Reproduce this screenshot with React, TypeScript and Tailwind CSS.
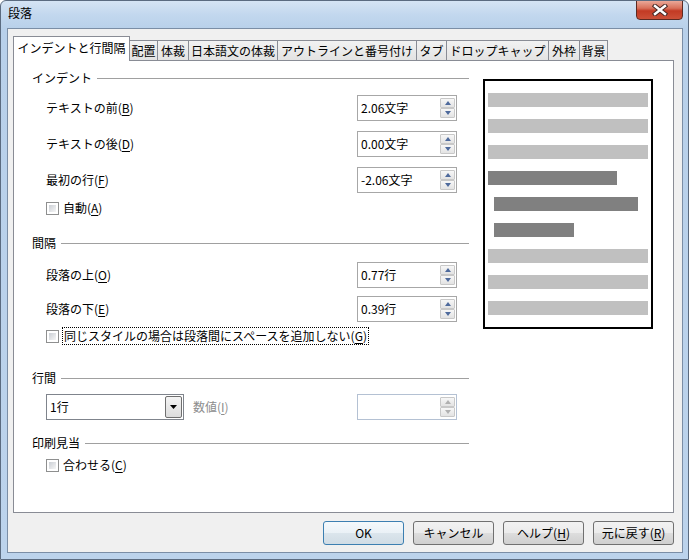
import React from 'react';

const font = '"Noto Sans CJK JP", "Noto Sans", sans-serif';

// widths measured off the reference tab strip
const tabs: { label: string; w: string }[] = [
  { label: '配置', w: 'w-[28px]' },
  { label: '体裁', w: 'w-[31px]' },
  { label: '日本語文の体裁', w: 'w-[89px]' },
  { label: 'アウトラインと番号付け', w: 'w-[139px]' },
  { label: 'タブ', w: 'w-[30px]' },
  { label: 'ドロップキャップ', w: 'w-[102px]' },
  { label: '外枠', w: 'w-[31px]' },
  { label: '背景', w: 'w-[28px]' },
];

function Key({ children }: { children: string }) {
  return <span className="underline underline-offset-2">{children}</span>;
}

function SpinArrow({ up, disabled }: { up?: boolean; disabled?: boolean }) {
  return (
    <div className="flex h-[10px] w-[15px] items-center justify-center rounded-[1px] border border-[#c8c8c8] bg-[linear-gradient(180deg,#f7f7f7,#e3e3e3)]">
      <svg width="6" height="4" viewBox="0 0 6 4">
        <path d={up ? 'M0 4 L3 0 L6 4 Z' : 'M0 0 L3 4 L6 0 Z'} fill={disabled ? '#b0b0b0' : '#4e6a9c'} />
      </svg>
    </div>
  );
}

function SpinBox({ value, disabled }: { value?: string; disabled?: boolean }) {
  return (
    <div
      className={
        disabled
          ? 'flex h-[26px] w-[100px] items-center border border-[#b4c1d3] bg-white pl-[3px] pr-[1px]'
          : 'flex h-[26px] w-[100px] items-center border border-[#a7a7a7] bg-white pl-[3px] pr-[1px]'
      }
    >
      <span className="flex-1 text-[12px] leading-none">{value}</span>
      <div className="flex flex-col">
        <SpinArrow up disabled={disabled} />
        <SpinArrow disabled={disabled} />
      </div>
    </div>
  );
}

function Checkbox() {
  return (
    <div className="h-[13px] w-[13px] border border-[#8e8f8f] bg-white p-[2px]">
      <div className="h-full w-full bg-[linear-gradient(135deg,#cbcfd5,#f6f6f6)]" />
    </div>
  );
}

function Heading({ label, className }: { label: string; className: string }) {
  return (
    <div className={`flex h-[16px] items-center gap-[5px] ${className}`}>
      <span className="text-[12px] leading-none">{label}</span>
      <div className="h-px flex-1 bg-[#a0a0a0]" />
    </div>
  );
}

function FieldRow({ label, k, value, className }: { label: string; k: string; value: string; className: string }) {
  return (
    <div className={`flex h-[26px] items-center ${className}`}>
      <span className="ml-[14px] w-[311px] text-[12px] leading-none">
        {label}(<Key>{k}</Key>)
      </span>
      <SpinBox value={value} />
    </div>
  );
}

function Bar({ dark, className }: { dark?: boolean; className: string }) {
  return <div className={`h-[14px] ${dark ? 'bg-[#808080]' : 'bg-[#c0c0c0]'} ${className}`} />;
}

function DialogButton({ children, primary }: { children: React.ReactNode; primary?: boolean }) {
  return (
    <button
      className={
        primary
          ? 'h-[24px] w-[81px] rounded-[3px] border border-[#3c7fb1] bg-[linear-gradient(180deg,#f4f9fc_0%,#eaf1f6_50%,#dbe5ec_51%,#d0dce5_100%)] text-[12px] leading-none text-black'
          : 'h-[24px] w-[81px] rounded-[3px] border border-[#707070] bg-[linear-gradient(180deg,#f2f2f2_0%,#ebebeb_50%,#dddddd_51%,#cfcfcf_100%)] text-[12px] leading-none text-black'
      }
    >
      {children}
    </button>
  );
}

export default function App() {
  return (
    <div
      className="flex h-[560px] w-[689px] flex-col overflow-hidden rounded-t-[6px] border border-[#5b6b80] bg-[linear-gradient(180deg,#d5e4f4_0px,#c2d7ee_14px,#b8d0ea_28px,#bcd3ec_100%)] text-black"
      style={{ fontFamily: font }}
    >
      {/* title bar */}
      <div className="flex h-[27px] items-start justify-between pl-[7px]">
        <span className="mt-[6px] text-[12px] leading-none">段落</span>
        <div className="mr-[5px] -mt-px flex h-[20px] w-[47px] items-center justify-center rounded-b-[4px] border border-[#5c2a22] bg-[linear-gradient(180deg,#eaa898_0%,#d8705a_40%,#c23a24_55%,#cc5038_100%)]">
          <svg width="16" height="12" viewBox="0 0 16 12">
            <path d="M3 2 L13 10 M13 2 L3 10" stroke="#4a2a26" strokeWidth="4.5" strokeLinecap="square" />
            <path d="M3 2 L13 10 M13 2 L3 10" stroke="#ffffff" strokeWidth="2.4" strokeLinecap="square" />
          </svg>
        </div>
      </div>

      {/* client area */}
      <div className="ml-[6px] mr-[5px] flex flex-1 flex-col border border-[#7b8ea6] bg-[#f0f0f0] pl-[5px] pr-[8px] pt-[7px] pb-[7px]">
        {/* tabs */}
        <div className="flex h-[24px] items-end">
          <div className="relative z-10 -mb-px flex h-[25px] w-[117px] items-start justify-center border-x border-t border-[#898c95] bg-white pt-[5px] text-[12px] leading-none">
            インデントと行間隔
          </div>
          {tabs.map((t) => (
            <div
              key={t.label}
              className={`flex h-[20px] items-center justify-center border-r border-t border-[#898c95] bg-[linear-gradient(180deg,#f2f2f2,#e3e3e3)] pt-[1px] text-[12px] leading-none whitespace-nowrap ${t.w}`}
            >
              {t.label}
            </div>
          ))}
        </div>

        {/* panel */}
        <div className="flex flex-1 border border-[#898c95] bg-white pl-[18px] pt-[9px]">
          <div className="flex w-[437px] flex-col">
            <Heading label="インデント" className="" />
            <FieldRow label="テキストの前" k="B" value="2.06文字" className="mt-[9px]" />
            <FieldRow label="テキストの後" k="D" value="0.00文字" className="mt-[10px]" />
            <FieldRow label="最初の行" k="F" value="-2.06文字" className="mt-[10px]" />
            <div className="ml-[14px] mt-[7px] flex h-[16px] items-center gap-[4px]">
              <Checkbox />
              <span className="text-[12px] leading-none">
                自動(<Key>A</Key>)
              </span>
            </div>

            <Heading label="間隔" className="mt-[19px]" />
            <FieldRow label="段落の上" k="O" value="0.77行" className="mt-[11px]" />
            <FieldRow label="段落の下" k="E" value="0.39行" className="mt-[8px]" />
            <div className="ml-[14px] mt-[5px] flex h-[18px] items-center gap-[3px]">
              <Checkbox />
              <span className="flex h-[18px] items-center border border-dotted border-black px-px text-[12px] leading-none">
                同じスタイルの場合は段落間にスペースを追加しない(<Key>G</Key>)
              </span>
            </div>

            <Heading label="行間" className="mt-[25px]" />
            <div className="mt-[8px] flex h-[26px] items-center">
              <div className="ml-[14px] flex h-[26px] w-[138px] items-center border border-[#7f848c] bg-white pl-[3px] pr-[1px]">
                <span className="flex-1 text-[12px] leading-none">1行</span>
                <div className="flex h-[22px] w-[17px] items-center justify-center rounded-[2px] border border-[#6f6f6f] bg-[linear-gradient(180deg,#f4f4f4,#dcdcdc)]">
                  <svg width="7" height="4" viewBox="0 0 7 4">
                    <path d="M0 0 L7 0 L3.5 4 Z" fill="#000" />
                  </svg>
                </div>
              </div>
              <span className="w-[173px] pl-[9px] text-[12px] leading-none text-[#8d8d8d]">
                数値(<Key>I</Key>)
              </span>
              <SpinBox disabled />
            </div>

            <Heading label="印刷見当" className="mt-[15px]" />
            <div className="ml-[14px] mt-[6px] flex h-[16px] items-center gap-[4px]">
              <Checkbox />
              <span className="text-[12px] leading-none">
                合わせる(<Key>C</Key>)
              </span>
            </div>
          </div>

          {/* preview */}
          <div className="ml-[14px] mt-[9px] flex h-[250px] w-[170px] flex-col gap-[12px] border-2 border-black pl-[3px] pt-[12px]">
            <Bar className="w-[160px]" />
            <Bar className="w-[160px]" />
            <Bar className="w-[160px]" />
            <Bar dark className="w-[129px]" />
            <Bar dark className="ml-[6px] w-[144px]" />
            <Bar dark className="ml-[6px] w-[80px]" />
            <Bar className="w-[160px]" />
            <Bar className="w-[160px]" />
            <Bar className="w-[160px]" />
          </div>
        </div>

        {/* buttons */}
        <div className="mt-[8px] flex justify-end gap-[9px]">
          <DialogButton primary>OK</DialogButton>
          <DialogButton>キャンセル</DialogButton>
          <DialogButton>
            ヘルプ(<Key>H</Key>)
          </DialogButton>
          <DialogButton>
            元に戻す(<Key>R</Key>)
          </DialogButton>
        </div>
      </div>
      <div className="h-[6px]" />
    </div>
  );
}
